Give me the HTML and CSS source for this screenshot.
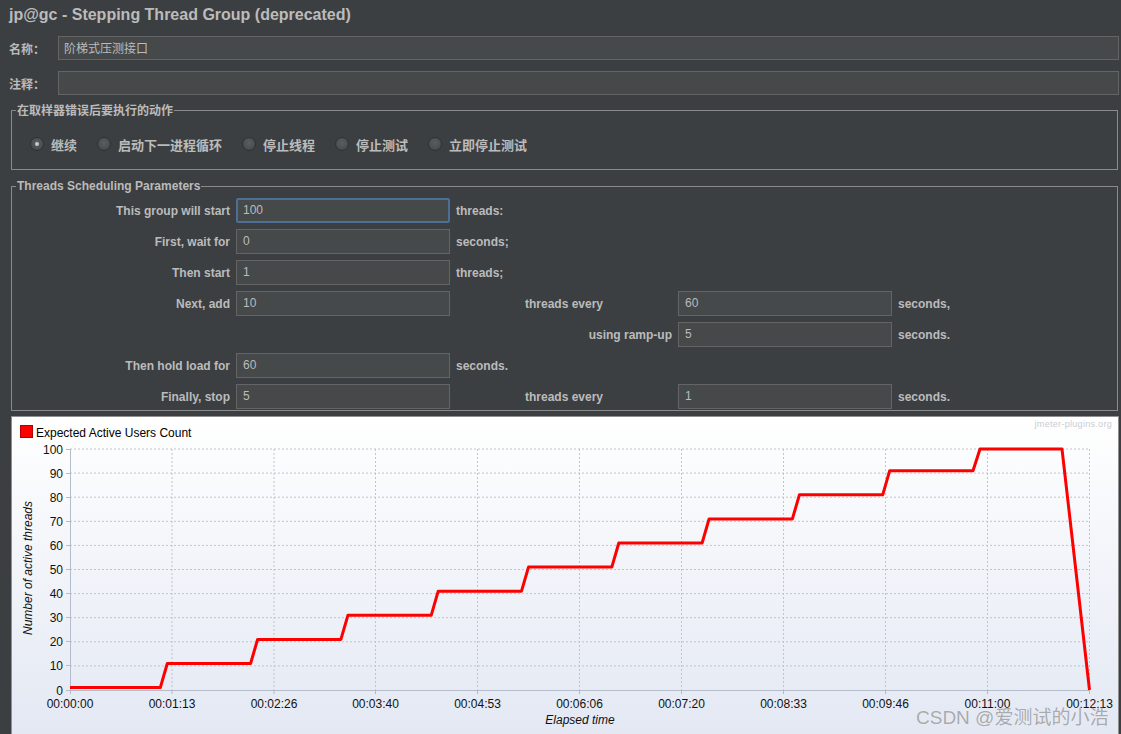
FILE: index.html
```html
<!DOCTYPE html>
<html lang="zh">
<head>
<meta charset="utf-8">
<title>Stepping Thread Group</title>
<link rel="stylesheet" href="styles.css">
</head>
<body>
<div class="page">
  <div class="title">jp@gc - Stepping Thread Group (deprecated)</div>

  <div class="field-row first">
    <span class="flabel">名称：</span>
    <div class="input wide">阶梯式压测接口</div>
  </div>
  <div class="field-row second">
    <span class="flabel">注释：</span>
    <div class="input wide"></div>
  </div>

  <fieldset class="group g1">
    <legend>在取样器错误后要执行的动作</legend>
    <div class="radios">
      <span class="radio"><span class="dot on"></span>继续</span>
      <span class="radio"><span class="dot"></span>启动下一进程循环</span>
      <span class="radio"><span class="dot"></span>停止线程</span>
      <span class="radio"><span class="dot"></span>停止测试</span>
      <span class="radio"><span class="dot"></span>立即停止测试</span>
    </div>
  </fieldset>

  <fieldset class="group g2">
    <legend>Threads Scheduling Parameters</legend>
    <div class="params">
      <span class="lab">This group will start</span>
      <div class="input focus c2">100</div>
      <span class="unit c3">threads:</span>

      <span class="lab">First, wait for</span>
      <div class="input c2">0</div>
      <span class="unit c3">seconds;</span>

      <span class="lab">Then start</span>
      <div class="input c2">1</div>
      <span class="unit c3">threads;</span>

      <span class="lab">Next, add</span>
      <div class="input c2">10</div>
      <span class="unit c3 center">threads every</span>
      <div class="input c4">60</div>
      <span class="unit c5">seconds,</span>

      <span class="unit c3 right">using ramp-up</span>
      <div class="input c4">5</div>
      <span class="unit c5">seconds.</span>

      <span class="lab">Then hold load for</span>
      <div class="input c2">60</div>
      <span class="unit c3">seconds.</span>

      <span class="lab">Finally, stop</span>
      <div class="input c2">5</div>
      <span class="unit c3 center">threads every</span>
      <div class="input c4">1</div>
      <span class="unit c5">seconds.</span>
    </div>
  </fieldset>

  <div class="chart">
    <svg class="plot" viewBox="12 417 1106 318" width="1106" height="318" xmlns="http://www.w3.org/2000/svg">
      <defs>
        <linearGradient id="bg" x1="0" y1="0" x2="0" y2="1">
          <stop offset="0" stop-color="#ffffff"/>
          <stop offset="1" stop-color="#e3e8f3"/>
        </linearGradient>
      </defs>
      <rect x="12" y="417" width="1106" height="318" fill="url(#bg)"/>

      <rect x="20.5" y="425.5" width="12" height="12" fill="#ff0000" stroke="#b40000"/>
      <text class="legend-text" x="36" y="436.5">Expected Active Users Count</text>
      <text class="brand" x="1112" y="426.5" text-anchor="end">jmeter-plugins.org</text>

      <g class="grid">
        <line x1="70" y1="449" x2="1090" y2="449"/>
        <line x1="70" y1="473.1" x2="1090" y2="473.1"/>
        <line x1="70" y1="497.2" x2="1090" y2="497.2"/>
        <line x1="70" y1="521.3" x2="1090" y2="521.3"/>
        <line x1="70" y1="545.4" x2="1090" y2="545.4"/>
        <line x1="70" y1="569.5" x2="1090" y2="569.5"/>
        <line x1="70" y1="593.6" x2="1090" y2="593.6"/>
        <line x1="70" y1="617.7" x2="1090" y2="617.7"/>
        <line x1="70" y1="641.8" x2="1090" y2="641.8"/>
        <line x1="70" y1="665.9" x2="1090" y2="665.9"/>
        <line x1="172" y1="449" x2="172" y2="690"/>
        <line x1="274" y1="449" x2="274" y2="690"/>
        <line x1="375.5" y1="449" x2="375.5" y2="690"/>
        <line x1="477.5" y1="449" x2="477.5" y2="690"/>
        <line x1="579.5" y1="449" x2="579.5" y2="690"/>
        <line x1="681.5" y1="449" x2="681.5" y2="690"/>
        <line x1="783.5" y1="449" x2="783.5" y2="690"/>
        <line x1="885.5" y1="449" x2="885.5" y2="690"/>
        <line x1="987.5" y1="449" x2="987.5" y2="690"/>
        <line x1="1089.5" y1="449" x2="1089.5" y2="690"/>
      </g>

      <g class="axis">
        <line x1="70.5" y1="449" x2="70.5" y2="694"/>
        <line x1="66" y1="690.5" x2="1090" y2="690.5"/>
        <line x1="66" y1="449.5" x2="70" y2="449.5"/>
        <line x1="66" y1="473.5" x2="70" y2="473.5"/>
        <line x1="66" y1="497.5" x2="70" y2="497.5"/>
        <line x1="66" y1="521.5" x2="70" y2="521.5"/>
        <line x1="66" y1="545.5" x2="70" y2="545.5"/>
        <line x1="66" y1="569.5" x2="70" y2="569.5"/>
        <line x1="66" y1="593.5" x2="70" y2="593.5"/>
        <line x1="66" y1="617.5" x2="70" y2="617.5"/>
        <line x1="66" y1="641.5" x2="70" y2="641.5"/>
        <line x1="66" y1="665.5" x2="70" y2="665.5"/>
        <line x1="172" y1="690" x2="172" y2="694"/>
        <line x1="274" y1="690" x2="274" y2="694"/>
        <line x1="375.5" y1="690" x2="375.5" y2="694"/>
        <line x1="477.5" y1="690" x2="477.5" y2="694"/>
        <line x1="579.5" y1="690" x2="579.5" y2="694"/>
        <line x1="681.5" y1="690" x2="681.5" y2="694"/>
        <line x1="783.5" y1="690" x2="783.5" y2="694"/>
        <line x1="885.5" y1="690" x2="885.5" y2="694"/>
        <line x1="987.5" y1="690" x2="987.5" y2="694"/>
        <line x1="1089.5" y1="690" x2="1089.5" y2="694"/>
      </g>

      <g class="ticks" text-anchor="end">
        <text x="63" y="454">100</text>
        <text x="63" y="478">90</text>
        <text x="63" y="502">80</text>
        <text x="63" y="526">70</text>
        <text x="63" y="550">60</text>
        <text x="63" y="574">50</text>
        <text x="63" y="598">40</text>
        <text x="63" y="622">30</text>
        <text x="63" y="646">20</text>
        <text x="63" y="670">10</text>
        <text x="63" y="695">0</text>
      </g>
      <g class="ticks" text-anchor="middle">
        <text x="70" y="708">00:00:00</text>
        <text x="172" y="708">00:01:13</text>
        <text x="274" y="708">00:02:26</text>
        <text x="375.5" y="708">00:03:40</text>
        <text x="477.5" y="708">00:04:53</text>
        <text x="579.5" y="708">00:06:06</text>
        <text x="681.5" y="708">00:07:20</text>
        <text x="783.5" y="708">00:08:33</text>
        <text x="885.5" y="708">00:09:46</text>
        <text x="987.5" y="708">00:11:00</text>
        <text x="1089.5" y="708">00:12:13</text>
      </g>

      <text class="axis-title" x="580" y="723.5" text-anchor="middle">Elapsed time</text>
      <text class="axis-title" transform="translate(31.5 568) rotate(-90)" text-anchor="middle">Number of active threads</text>

      <polyline class="series" points="70,687.6 160.3,687.6 167.3,663.5 250.6,663.5 257.6,639.4 340.9,639.4 347.9,615.3 431.2,615.3 438.2,591.2 521.5,591.2 528.5,567.1 611.8,567.1 618.8,543 702.1,543 709.1,518.9 792.4,518.9 799.4,494.8 882.7,494.8 889.7,470.7 973,470.7 980,449 1062,449 1089.5,690"/>
    </svg>
    <div class="watermark">CSDN @爱测试的小浩</div>
  </div>
</div>
</body>
</html>
```

FILE: styles.css
```css
html, body {
  margin: 0;
  padding: 0;
  background: #3c3f41;
  overflow: hidden;
}

.page {
  width: 1121px;
  height: 734px;
  overflow: hidden;
  color: #bbbbbb;
  font-family: "Liberation Sans", "Noto Sans CJK SC", Arial, sans-serif;
  font-size: 12px;
}

.title {
  height: 30px;
  line-height: 30px;
  padding-left: 9px;
  font-size: 16px;
  font-weight: bold;
  color: #bbbbbb;
}

.field-row {
  display: flex;
  align-items: center;
  height: 24px;
  padding-left: 9px;
  padding-right: 2px;
}
.field-row.first { margin-top: 6px; }
.field-row.second { margin-top: 11px; }

.flabel {
  width: 49px;
  flex: none;
  font-family: "Noto Sans CJK SC", sans-serif;
  font-size: 12px;
  font-weight: bold;
  color: #bbbbbb;
}

.input {
  box-sizing: border-box;
  height: 24px;
  background: #45494a;
  border: 1px solid #646464;
  color: #bbbbbb;
  font-family: "Liberation Sans", "Noto Sans CJK SC", sans-serif;
  font-size: 12px;
  line-height: 22px;
  padding-left: 5px;
  white-space: nowrap;
}
.input.wide {
  flex: 1;
  font-family: "Noto Sans CJK SC", sans-serif;
}
.input.focus {
  border: 2px solid #4d6f96;
  border-radius: 2px;
  line-height: 20px;
  padding-left: 5px;
}

.group {
  margin: 0 3px 0 11px;
  padding: 0;
  border: 1px solid #8a8a8a;
  min-width: 0;
}
.group legend {
  margin-left: 4px;
  padding: 0 1px;
  height: 14px;
  line-height: 14px;
  font-weight: bold;
  font-size: 12px;
  color: #bbbbbb;
}
.g1 {
  margin-top: 8px;
  padding: 17px 0 15px 0;
}
.g1 legend {
  font-family: "Noto Sans CJK SC", sans-serif;
}
.g2 {
  margin-top: 9px;
  padding: 5px 0 1px 0;
}

.radios {
  display: flex;
  align-items: center;
  gap: 20px;
  height: 20px;
  padding-left: 18px;
}
.radio {
  display: flex;
  align-items: center;
  font-family: "Noto Sans CJK SC", sans-serif;
  font-size: 13px;
  font-weight: bold;
  color: #bbbbbb;
}
.dot {
  box-sizing: border-box;
  width: 14px;
  height: 14px;
  margin-right: 7px;
  border-radius: 50%;
  border: 1px solid #2f3133;
  background: radial-gradient(circle at 50% 40%, #5a5e61 0%, #4b4f52 60%, #3f4244 100%);
  position: relative;
}
.dot.on::after {
  content: "";
  position: absolute;
  left: 4px;
  top: 4px;
  width: 4px;
  height: 4px;
  border-radius: 50%;
  background: #c8c8c8;
}

.params {
  display: grid;
  grid-template-columns: 218px 214px 216px 214px auto;
  grid-auto-rows: 25px;
  column-gap: 6px;
  row-gap: 6px;
}
.params .input {
  height: 25px;
  line-height: 23px;
  padding-left: 6px;
}
.params .input.focus {
  line-height: 21px;
  padding-left: 5px;
}
.lab {
  grid-column: 1;
  text-align: right;
  align-self: center;
  font-weight: bold;
}
.unit {
  align-self: center;
  font-weight: bold;
  white-space: nowrap;
}
.c2 { grid-column: 2; }
.c3 { grid-column: 3; }
.c4 { grid-column: 4; }
.c5 { grid-column: 5; }
.center { text-align: center; }
.right { text-align: right; }

.chart {
  position: relative;
  margin: 5px 2px 0 11px;
  height: 330px;
  border: 1px solid #909090;
  border-bottom: none;
  background: #ffffff;
  overflow: hidden;
}
.plot {
  display: block;
  font-family: "Liberation Sans", Arial, sans-serif;
}
.legend-text {
  font-size: 12px;
  fill: #000000;
}
.brand {
  font-size: 9px;
  fill: #c9ccd3;
  letter-spacing: 0.3px;
}
.grid line {
  stroke: #c2c4c8;
  stroke-width: 1;
  stroke-dasharray: 2 2;
}
.axis line {
  stroke: #b4bccb;
  stroke-width: 1;
}
.ticks text {
  font-size: 12px;
  fill: #111111;
}
.axis-title {
  font-size: 12px;
  font-style: italic;
  fill: #111111;
}
.series {
  fill: none;
  stroke: #ff0000;
  stroke-width: 3;
  stroke-linejoin: round;
}

.watermark {
  position: absolute;
  left: 904px;
  top: 285px;
  font-family: "Liberation Sans", "Noto Sans CJK SC", sans-serif;
  font-size: 19px;
  color: rgba(105, 105, 105, 0.55);
  white-space: nowrap;
  text-shadow: 0 0 1px rgba(255, 255, 255, 0.6);
}
```
